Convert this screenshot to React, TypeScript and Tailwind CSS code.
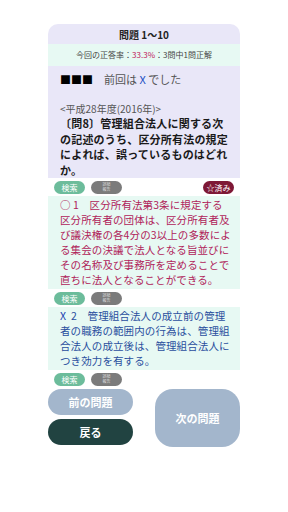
import React from "react";

const jp = { fontFamily: '"Noto Sans CJK JP", "Noto Sans", sans-serif' };

const Tools = ({ done }: { done?: boolean }) => (
  <div className="flex items-center h-[18px] px-[6px] bg-white">
    <span className="w-[31px] h-[13px] rounded-full bg-[#6cbc9b] text-white text-[8px] leading-[13px] text-center">
      検索
    </span>
    <span className="ml-[6px] w-[31px] h-[13px] rounded-full bg-[#7b7b7b] text-[#dcdcdc] text-[4px] leading-[5px] flex flex-col items-center justify-center">
      <span>誤植</span>
      <span>報告</span>
    </span>
    {done && (
      <span className="ml-auto w-[31px] h-[13px] rounded-full bg-[#7e1836] text-white text-[8px] leading-[13px] text-center">
        ☆済み
      </span>
    )}
  </div>
);

export default function App() {
  return (
    <div className="w-[288px] h-[512px] bg-white pt-[24px]" style={jp}>
      <div className="mx-[48px] w-[192px]">
        <div className="rounded-t-[10px] bg-[#e9e7f8] h-[20px] flex items-center justify-center text-[10px] font-bold text-[#222]">
          問題 1〜10
        </div>
        <div className="bg-[#e7f9f3] h-[22px] flex items-center justify-center text-[8px] text-[#444]">
          今回の正答率：<span className="text-[#c0185a]">33.3%</span>：3問中1問正解
        </div>
        <div className="bg-[#e9e7f8] pl-3 pr-2 pt-[5px] h-[112px]">
          <div className="text-[11px] leading-[17px] text-[#555]">
            <span className="text-black font-bold">■■■</span>　前回は <span className="text-[#1b4fc4]">X</span> でした
          </div>
          <div className="mt-[14px] text-[10px] leading-[14px] text-[#555]">&lt;平成28年度(2016年)&gt;</div>
          <div className="text-[11px] leading-[15.5px] font-bold text-[#1a1a1a] tracking-[0.2px]">
            〔問8〕管理組合法人に関する次の記述のうち、区分所有法の規定によれば、誤っているものはどれか。
          </div>
        </div>
        <Tools done />
        <div className="bg-[#e7f9f3] pl-3 pr-2 pt-[1px] pb-[2px] text-[10.5px] leading-[15px] text-[#b0235a] tracking-[0.1px]">
          ○ 1　区分所有法第3条に規定する区分所有者の団体は、区分所有者及び議決権の各4分の3以上の多数による集会の決議で法人となる旨並びにその名称及び事務所を定めることで直ちに法人となることができる。
        </div>
        <Tools />
        <div className="bg-[#e7f9f3] pl-3 pr-2 pt-[1px] pb-[2px] text-[10.5px] leading-[15px] text-[#2a4f9e] tracking-[0.1px]">
          <span className="text-[#1b3fb0]">X</span>
          {"\u00a0\u00a02　管理組合法人の成立前の管理者の職務の範囲内の行為は、管理組合法人の成立後は、管理組合法人につき効力を有する。"}
        </div>
        <Tools />
        <div className="flex justify-between mt-[1px]">
          <div className="flex flex-col gap-[4px]">
            <button className="w-[85px] h-[26px] rounded-full bg-[#a3b6cc] text-white text-[11px] font-bold">
              前の問題
            </button>
            <button className="w-[85px] h-[26px] rounded-full bg-[#214341] text-white text-[11px] font-bold">
              戻る
            </button>
          </div>
          <button className="w-[85px] h-[58px] rounded-[18px] bg-[#a3b6cc] text-white text-[11px] font-bold">
            次の問題
          </button>
        </div>
      </div>
    </div>
  );
}
